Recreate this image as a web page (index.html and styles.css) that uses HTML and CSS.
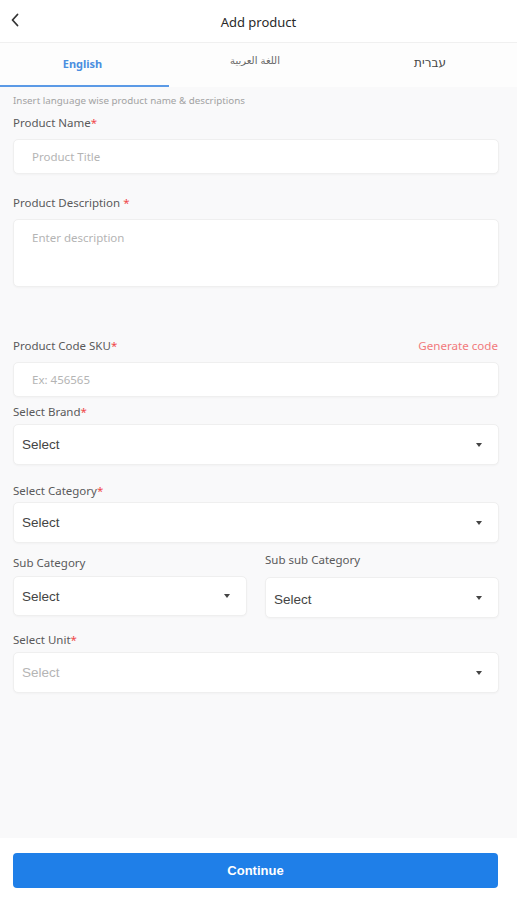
FILE: index.html
```html
<!DOCTYPE html>
<html lang="en">
<head>
<meta charset="utf-8">
<title>Add product</title>
<link rel="stylesheet" href="styles.css">
</head>
<body>
<div class="page">
  <header class="topbar">
    <span class="back">
      <svg width="10" height="14" viewBox="0 0 10 14"><path d="M7.5 1.5 L2.5 7 L7.5 12.5" fill="none" stroke="#333" stroke-width="1.8" stroke-linecap="round" stroke-linejoin="round"/></svg>
    </span>
    <h1 class="title">Add product</h1>
  </header>
  <nav class="tabs">
    <div class="tab active">English</div>
    <div class="tab ar" lang="ar">اللغة العربية</div>
    <div class="tab he" lang="he">עברית</div>
  </nav>
  <main class="form">
    <p class="hint">Insert language wise product name &amp; descriptions</p>

    <div class="field f-name">
      <label class="label">Product Name<span class="req">*</span></label>
      <div class="box input"><span class="ph">Product Title</span></div>
    </div>

    <div class="field f-desc">
      <label class="label">Product Description<span class="req"> *</span></label>
      <div class="box textarea"><span class="ph">Enter description</span></div>
    </div>

    <div class="field f-sku">
      <div class="label-row">
        <label class="label">Product Code SKU<span class="req">*</span></label>
        <span class="gen">Generate code</span>
      </div>
      <div class="box input"><span class="ph">Ex: 456565</span></div>
    </div>

    <div class="field f-brand">
      <label class="label">Select Brand<span class="req">*</span></label>
      <div class="box select"><span class="sel">Select</span><span class="caret"></span></div>
    </div>

    <div class="field f-cat">
      <label class="label">Select Category<span class="req">*</span></label>
      <div class="box select"><span class="sel">Select</span><span class="caret"></span></div>
    </div>

    <div class="pair">
      <div class="field f-sub">
        <label class="label">Sub Category</label>
        <div class="box select s40"><span class="sel">Select</span><span class="caret"></span></div>
      </div>
      <div class="field f-subsub">
        <label class="label">Sub sub Category</label>
        <div class="box select"><span class="sel lower">Select</span><span class="caret"></span></div>
      </div>
    </div>

    <div class="field f-unit">
      <label class="label">Select Unit<span class="req">*</span></label>
      <div class="box select"><span class="sel light">Select</span><span class="caret"></span></div>
    </div>
  </main>
  <footer class="footer">
    <button class="continue" type="button">Continue</button>
  </footer>
</div>
</body>
</html>
```

FILE: styles.css
```css
* { box-sizing: border-box; }
html, body { margin: 0; padding: 0; }
body {
  background: #f9f9fa;
  font-family: "Noto Sans", "Open Sans", sans-serif;
  color: #555;
}
.page {
  display: flex;
  flex-direction: column;
  height: 900px;
  width: 517px;
}
.topbar {
  height: 43px;
  background: #fff;
  border-bottom: 1px solid #f0f0f0;
  display: flex;
  align-items: center;
  justify-content: center;
  position: relative;
}
.back {
  position: absolute;
  left: 10px;
  top: 13px;
  display: flex;
}
.title {
  margin: 0;
  font-size: 13px;
  font-weight: 400;
  color: #2a2a2a;
  padding-top: 1px;
}
.tabs {
  height: 44px;
  background: #fdfdfd;
  display: grid;
  grid-template-columns: 169px 172px 1fr;
}
.tab {
  display: flex;
  align-items: center;
  justify-content: center;
  font-size: 11px;
  color: #555;
  border-bottom: 2px solid transparent;
  padding-bottom: 2px;
}
.tab.active {
  color: #4a8ee0;
  font-weight: 700;
  border-bottom-color: #5b9ae6;
  padding-right: 4px;
}
.tab.ar {
  font-size: 10px;
  padding-bottom: 7px;
  color: #666;
  font-family: "DejaVu Sans", sans-serif;
}
.tab.he {
  font-size: 12px;
  color: #444;
  padding-left: 2px;
  font-family: "DejaVu Sans", sans-serif;
}
.form {
  flex: 1;
  padding: 8px 18px 0 13px;
  display: flex;
  flex-direction: column;
}
.hint {
  margin: 0;
  font-size: 9.8px;
  line-height: 12px;
  color: #a2a2a2;
}
.field { display: flex; flex-direction: column; }
.label {
  font-size: 11.5px;
  line-height: 14px;
  color: #5a5a5a;
}
.req { color: #f0484a; }
.label-row {
  display: flex;
  justify-content: space-between;
  align-items: center;
  margin-right: 1px;
}
.gen {
  font-size: 11.6px;
  line-height: 14px;
  color: #f27a7c;
}
.box {
  background: #fff;
  border: 1px solid #efefef;
  border-radius: 5px;
  box-shadow: 0 1px 2px rgba(0,0,0,0.03);
  display: flex;
  align-items: center;
}
.input { height: 35px; padding-left: 18px; margin-top: 9px; }
.textarea { height: 68px; padding: 10px 18px; align-items: flex-start; margin-top: 9px; }
.ph { font-size: 11.5px; color: #b4b4b4; }
.select {
  height: 41px;
  padding: 0 16px 0 8px;
  justify-content: space-between;
}
.sel {
  font-family: "Liberation Sans", Arial, sans-serif;
  font-size: 13.5px;
  color: #444;
}
.sel.light { color: #b5b5b5; }
.caret {
  width: 0; height: 0;
  border-left: 3px solid transparent;
  border-right: 3px solid transparent;
  border-top: 4px solid #444;
}
.f-name { margin-top: 9px; }
.f-desc { margin-top: 22px; }
.f-sku { margin-top: 52px; }
.f-brand { margin-top: 8px; }
.f-brand .box { margin-top: 5px; }
.f-cat { margin-top: 19px; }
.f-cat .box { margin-top: 4px; }
.pair {
  display: grid;
  grid-template-columns: 234px 234px;
  column-gap: 18px;
  margin-top: 13px;
}
.f-sub .box { margin-top: 6px; height: 40px; }
.f-subsub .label { margin-top: -3px; }
.f-subsub .box { margin-top: 10px; }
.f-subsub .sel { padding-top: 3px; }
.f-unit { margin-top: 15px; }
.f-unit .box { margin-top: 5px; }
.footer {
  height: 62px;
  background: #fff;
  padding: 15px 19px 0 13px;
}
.continue {
  width: 100%;
  height: 35px;
  border: 0;
  border-radius: 4px;
  background: #1f7fe8;
  color: #fff;
  font-family: "Liberation Sans", Arial, sans-serif;
  font-weight: 700;
  font-size: 13px;
}
```
